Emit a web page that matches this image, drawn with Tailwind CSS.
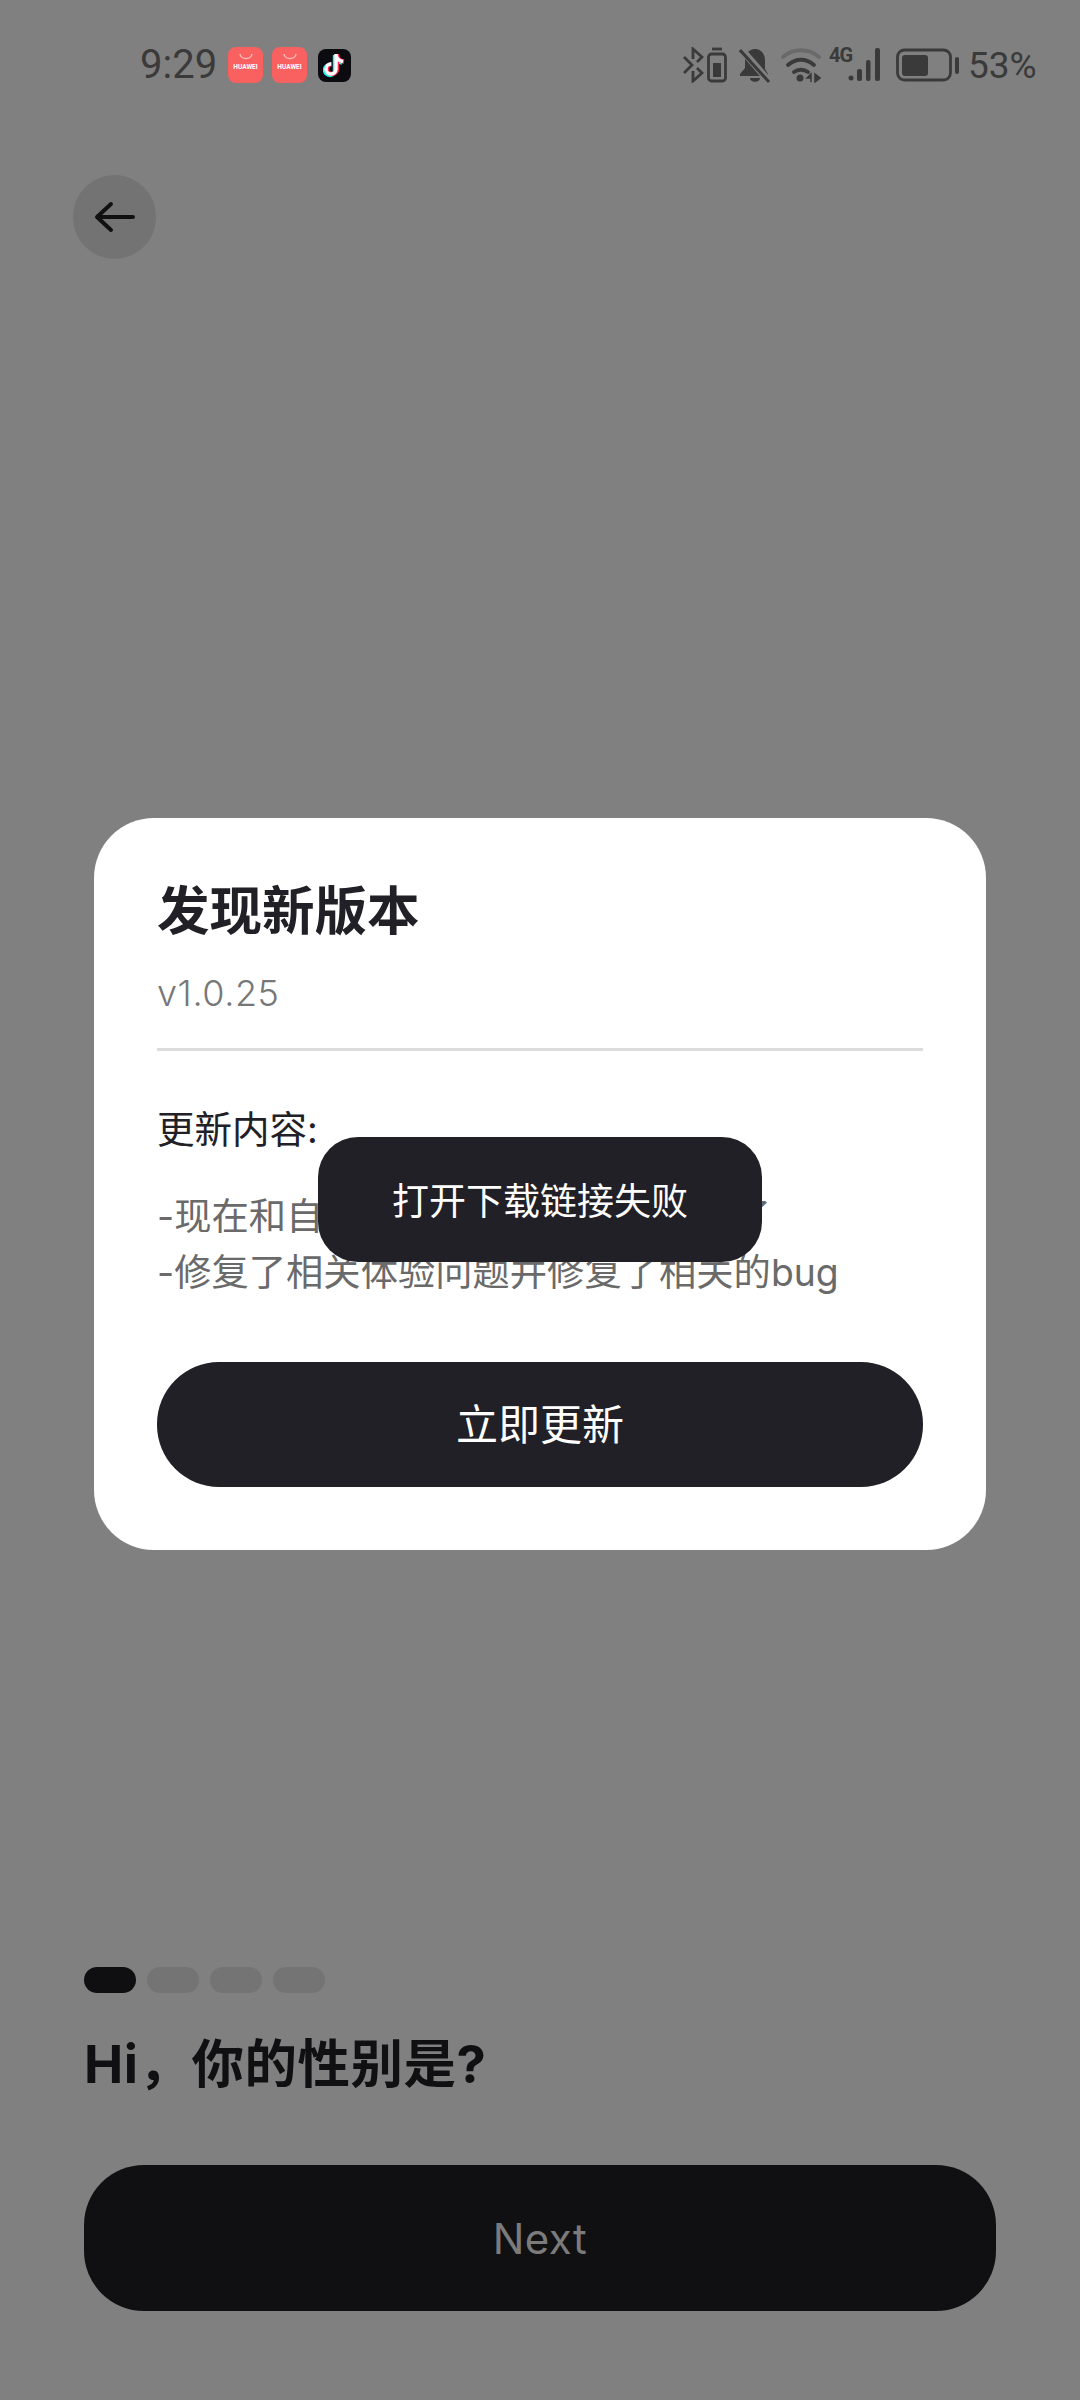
<!DOCTYPE html>
<html lang="zh">
<head>
    <meta charset="utf-8">
    <title>发现新版本</title>
    <meta name="viewport" content="width=device-width, initial-scale=1.0">
    <script src="https://cdn.jsdelivr.net/npm/@tailwindcss/browser@4"></script>
</head>
<body class="bg-[#808080] font-['Inter','Noto_Sans_CJK_SC',sans-serif]">
    <div class="relative w-[1080px] h-[2400px] overflow-hidden flex flex-col">
        <!-- Status bar -->
        <div class="flex items-center h-[36px] mt-[47px] pl-[140px] pr-[43px] text-[#3a3a3a] font-['Roboto',sans-serif]">
            <span class="text-[40px] leading-none w-[88px]">9:29</span>
            <div class="w-[35px] h-[36px] rounded-[8px] bg-[#f96060] flex flex-col items-center text-white">
                <svg class="w-[16px] h-[8px] mt-[6px]" viewBox="0 0 16 8" fill="none" stroke="#fbb" stroke-width="1.5"><path d="M2 1c1 6 11 6 12 0"/></svg>
                <span class="text-[6.500px] leading-[8px] mt-[2px] font-bold">HUAWEI</span>
            </div>
            <div class="ml-[9px] w-[35px] h-[36px] rounded-[8px] bg-[#f96060] flex flex-col items-center text-white">
                <svg class="w-[16px] h-[8px] mt-[6px]" viewBox="0 0 16 8" fill="none" stroke="#fbb" stroke-width="1.5"><path d="M2 1c1 6 11 6 12 0"/></svg>
                <span class="text-[6.500px] leading-[8px] mt-[2px] font-bold">HUAWEI</span>
            </div>
            <div class="ml-[11px] w-[33px] h-[33px] rounded-[8px] bg-[#0b0b10] flex items-center justify-center">
                <svg class="w-[24px] h-[26px]" viewBox="0 0 24 26" fill="none" stroke-width="4.4">
                    <path d="M13 2v15a5 5 0 1 1-5-5M13 3c.5 3.500 3 6 7 6.500" stroke="#25f4ee" transform="translate(-1 1)"/>
                    <path d="M13 2v15a5 5 0 1 1-5-5M13 3c.5 3.500 3 6 7 6.500" stroke="#fe2c55" transform="translate(1 0)"/>
                    <path d="M13 2v15a5 5 0 1 1-5-5M13 3c.5 3.500 3 6 7 6.500" stroke="#fff" stroke-width="3.400"/>
                </svg>
            </div>

            <div class="ml-auto flex items-center">
                <!-- bluetooth -->
                <svg class="w-[22px] h-[36px]" viewBox="0 0 22 36" fill="none" stroke="#3a3a3a" stroke-width="2.800">
                    <path d="M11 12V2l9 8-5 5M15 21l5 5-9 8V24M2 10l8 8-8 8"/>
                </svg>
                <!-- battery saver -->
                <svg class="ml-[3px] w-[20px] h-[36px]" viewBox="0 0 20 36" fill="none" stroke="#3a3a3a" stroke-width="2.800">
                    <path d="M5 2h10"/><rect x="1.500" y="7" width="17" height="27" rx="3"/><rect x="6" y="16" width="8" height="14" fill="#3a3a3a" stroke="none"/>
                </svg>
                <!-- muted bell -->
                <svg class="ml-[12px] w-[32px] h-[36px]" viewBox="0 0 32 36" fill="#3a3a3a">
                    <path d="M16 2c6 0 10 5 10 11v9l3 5v2H1v-2l5-6v-8c0-6 4-11 10-11zM11 31h10c0 5-10 5-10 0z"/>
                    <path d="M2 2l27 31" stroke="#808080" stroke-width="7"/>
                    <path d="M1 3l29 32" stroke="#3a3a3a" stroke-width="3"/>
                </svg>
                <!-- wifi -->
                <svg class="ml-[10px] w-[40px] h-[36px]" viewBox="0 0 40 36" fill="none" stroke-linecap="round" stroke-width="3.800">
                    <path d="M2 10c10-9 26-9 36 0" stroke="#6a6a6a"/>
                    <path d="M7 18c8-7 18-7 26 0M13 25c4-3 10-3 14 0" stroke="#3a3a3a"/>
                    <circle cx="19" cy="31" r="3.500" fill="#3a3a3a" stroke="none"/>
                    <path d="M30 27l-4 4h4zM30 27v8M34 27v8l5-4z" fill="#3a3a3a" stroke="#3a3a3a" stroke-width="1.500" stroke-linecap="butt"/>
                </svg>
                <!-- 4G + signal -->
                <div class="relative ml-[8px] w-[54px] h-[36px]">
                    <span class="absolute left-0 top-[-1px] text-[20px] leading-[18px] font-bold tracking-[-1px]">4G</span>
                    <svg class="absolute left-[19px] top-0 w-[35px] h-[36px]" viewBox="0 0 35 36" fill="#3a3a3a">
                        <circle cx="3" cy="31" r="2.500"/><rect x="9" y="22" width="5" height="12" rx="2"/><rect x="18" y="13" width="4.500" height="21" rx="2"/><rect x="27" y="1" width="5" height="33" rx="2"/>
                    </svg>
                </div>
                <!-- battery -->
                <svg class="ml-[13px] w-[63px] h-[36px]" viewBox="0 0 63 36" fill="none">
                    <rect x="1.500" y="3" width="53" height="30" rx="7" stroke="#3a3a3a" stroke-width="2.800"/>
                    <rect x="6" y="8" width="26" height="21" rx="3" fill="#3a3a3a"/>
                    <rect x="59" y="10" width="4" height="17" rx="2" fill="#3a3a3a"/>
                </svg>
                <span class="ml-[9px] text-[37px] leading-none w-[69px] whitespace-nowrap">53%</span>
            </div>
        </div>

        <!-- Back button -->
        <div class="mt-[92px] ml-[73px] w-[83px] h-[84px] rounded-full bg-[#737373] flex items-center justify-center">
            <svg class="w-[44px] h-[36px]" viewBox="0 0 44 36" fill="none" stroke="#111" stroke-width="4" stroke-linecap="round" stroke-linejoin="round">
                <path d="M40 18H5M18 5L4 18l14 13"/>
            </svg>
        </div>

        <!-- Onboarding footer -->
        <div class="mt-auto px-[84px] pb-[89px]">
            <div class="flex gap-[11px]">
                <div class="w-[52px] h-[26px] rounded-full bg-[#0f0f11]"></div>
                <div class="w-[52px] h-[26px] rounded-full bg-[#747474]"></div>
                <div class="w-[52px] h-[26px] rounded-full bg-[#747474]"></div>
                <div class="w-[52px] h-[26px] rounded-full bg-[#747474]"></div>
            </div>
            <h2 class="mt-[41px] text-[52.500px] leading-[60px] font-bold tracking-[0.5px] text-[#101012]">Hi，你的性别是?</h2>
            <div class="mt-[71px] h-[146px] rounded-[60px] bg-[#101012] flex items-center justify-center text-[42px] tracking-[0.5px] text-[#7b7b7b]">Next</div>
        </div>

        <!-- Update dialog -->
        <div class="absolute left-[94px] top-[818px] w-[892px] h-[732px] rounded-[60px] bg-white px-[63px] pt-[61px]">
            <h1 class="text-[52.500px] leading-[64px] font-bold text-[#212026]">发现新版本</h1>
            <p class="mt-[28px] text-[36px] leading-[44px] tracking-[0.6px] font-light text-[#777]">v1.0.25</p>
            <div class="mt-[33px] h-[3px] bg-[#dcdcdc]"></div>
            <p class="mt-[57px] text-[37.500px] leading-[44px] text-[#212026]">更新内容:</p>
            <div class="mt-[37px] text-[37.300px] leading-[56px] text-[#6a6a6a]">
                <p>-现在和自己喜欢的角色聊天更流畅了</p>
                <p>-修复了相关体验问题并修复了相关的bug</p>
            </div>
            <div class="absolute left-[63px] right-[63px] bottom-[63px] h-[125px] rounded-[62px] bg-[#212026] flex items-center justify-center text-[42px] text-white">立即更新</div>
        </div>

        <!-- Toast -->
        <div class="absolute left-[318px] top-[1137px] w-[444px] h-[125px] rounded-[40px] bg-[#212026] flex items-center justify-center pt-[5px] text-[37px] text-white">打开下载链接失败</div>
    </div>
</body>
</html>
